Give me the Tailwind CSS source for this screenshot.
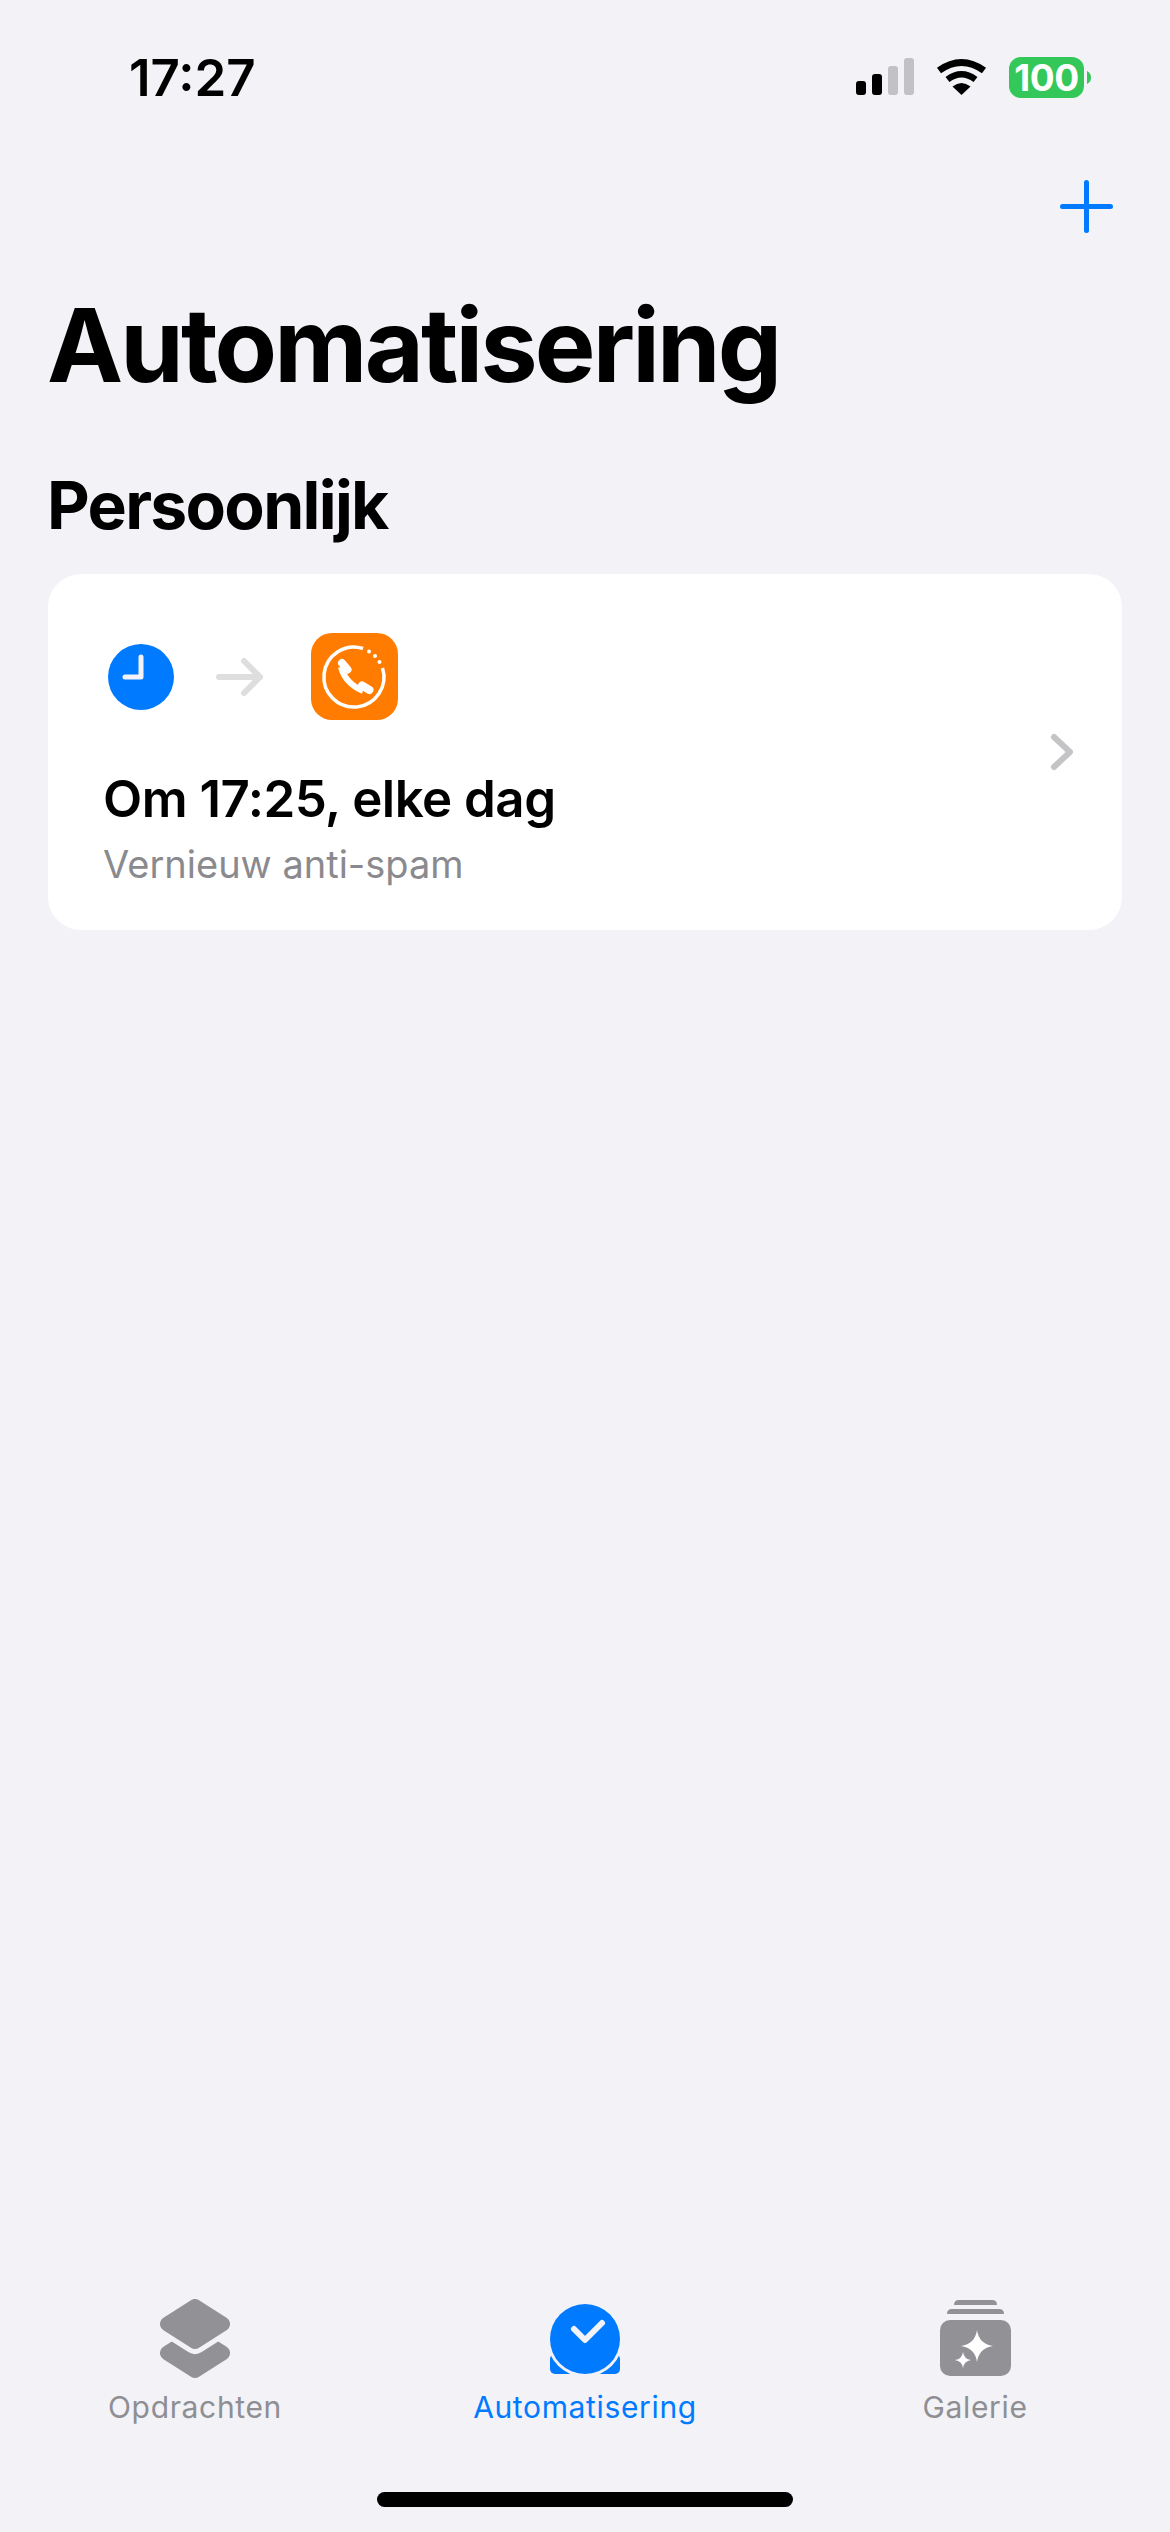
<!DOCTYPE html>
<html lang="nl">
<head>
    <meta charset="utf-8">
    <title>Automatisering</title>
    <script src="https://cdn.jsdelivr.net/npm/@tailwindcss/browser@4"></script>
</head>
<body class="bg-[#f2f2f7] font-['Inter',sans-serif] text-black">
    <div class="flex flex-col h-[2532px] w-[1170px] overflow-hidden">
        <!-- Status bar -->
        <div class="flex items-center justify-between pt-[57px] pl-[129px] pr-[79px]">
            <span class="text-[51px] leading-[41px] font-semibold">17:27</span>
            <div class="flex items-center">
                <div class="flex items-end gap-[6px] h-[37px] mt-[-2px]">
                    <div class="w-[10px] h-[14px] rounded-[3px] bg-black"></div>
                    <div class="w-[10px] h-[21px] rounded-[3px] bg-black"></div>
                    <div class="w-[10px] h-[29px] rounded-[3px] bg-[#c1c1c6]"></div>
                    <div class="w-[10px] h-[37px] rounded-[3px] bg-[#c1c1c6]"></div>
                </div>
                <svg class="ml-[22px] mt-[-2px]" width="51" height="37" viewBox="0 0 51 37" fill="none">
                    <path d="M3 12.5Q25.5 -3.5 48 12.5" stroke="#000" stroke-width="7"/>
                    <path d="M11.5 21.5Q25.5 11 39.5 21.5" stroke="#000" stroke-width="6.5"/>
                    <path d="M16.5 28.5Q25.5 21.5 34.5 28.5L25.5 37Z" fill="#000"/>
                </svg>
                <div class="ml-[22px] w-[75px] h-[41px] rounded-[12px] bg-[#34c759] text-white text-[37px] leading-[41px] font-bold text-center tracking-[-0.5px]">100</div>
                <svg class="ml-[3px]" width="4" height="13" viewBox="0 0 4 13"><path d="M0 0Q4 2 4 6.5Q4 11 0 13Z" fill="#34c759"/></svg>
            </div>
        </div>

        <!-- Add button -->
        <div class="flex justify-end pr-[57px] mt-[82px]">
            <svg width="53" height="53" viewBox="0 0 53 53" fill="none" stroke="#007aff" stroke-width="5" stroke-linecap="round">
                <path d="M26.5 2.5V50.5M2.5 26.5H50.5"/>
            </svg>
        </div>

        <h1 class="ml-[47px] mt-[52px] text-[102px] leading-[120px] font-bold tracking-[-2.8px]">Automatisering</h1>
        <h2 class="ml-[47px] mt-[60px] text-[66px] leading-[80px] font-bold tracking-[-1.7px]">Persoonlijk</h2>

        <!-- Automation card -->
        <div class="mx-[48px] mt-[29px] h-[356px] bg-white rounded-[33px] flex items-start justify-between pl-[55px] pr-[50px] pt-[59px]">
            <div>
                <div class="flex items-center pl-[5px]">
                    <svg width="66" height="66" viewBox="0 0 66 66">
                        <circle cx="33" cy="33" r="33" fill="#007aff"/>
                        <path d="M33 13V33H17" fill="none" stroke="#f2f2f7" stroke-width="5" stroke-linecap="round" stroke-linejoin="round"/>
                    </svg>
                    <svg class="ml-[42px]" width="48" height="38" viewBox="0 0 48 38" fill="none" stroke="#dedede" stroke-width="6" stroke-linecap="round" stroke-linejoin="round">
                        <path d="M3 19H44M28 3L44 19L28 35"/>
                    </svg>
                    <svg class="ml-[47px]" width="87" height="87" viewBox="0 0 87 87" fill="none">
                        <rect width="87" height="87" rx="21" fill="#ff7c00"/>
                        <path d="M52 15.5A30 30 0 1 0 71.5 35" stroke="#fff" stroke-width="3.5"/>
                        <circle cx="58" cy="18.5" r="2" fill="#fff"/>
                        <circle cx="64" cy="23" r="2" fill="#fff"/>
                        <circle cx="68.5" cy="29" r="2" fill="#fff"/>
                        <path d="M30 34Q34 50 52 58" stroke="#fff" stroke-width="6"/>
                        <path d="M31 30L36.5 36.5M51 52.5L58.5 57" stroke="#fff" stroke-width="8" stroke-linecap="round"/>
                    </svg>
                </div>
                <p class="mt-[47px] text-[51px] leading-[64px] font-semibold tracking-[-0.5px]">Om 17:25, elke dag</p>
                <p class="mt-[8px] text-[38px] leading-[50px] text-[#8a8a8e]">Vernieuw anti-spam</p>
            </div>
            <svg class="self-center mt-[-59px] mr-[-2px]" width="24" height="38" viewBox="0 0 24 38" fill="none" stroke="#c4c4c7" stroke-width="6" stroke-linecap="round" stroke-linejoin="round">
                <path d="M4 4L20 19L4 34"/>
            </svg>
        </div>

        <!-- Tab bar -->
        <div class="mt-auto grid grid-cols-3 text-[30px] leading-[40px] tracking-[0.65px] text-center">
            <div class="flex flex-col items-center text-[#8e8e93]">
                <div class="h-[80px] flex items-start">
                    <svg width="70" height="80" viewBox="0 0 70 80" stroke-linejoin="round">
                        <path d="M35 36.5L62.5 54L35 71.5L7.5 54Z" fill="#929296" stroke="#929296" stroke-width="15"/>
                        <path d="M35 7.5L62.5 25L35 42.5L7.5 25Z" fill="#f2f2f7" stroke="#f2f2f7" stroke-width="25"/>
                        <path d="M35 7.5L62.5 25L35 42.5L7.5 25Z" fill="#929296" stroke="#929296" stroke-width="15"/>
                    </svg>
                </div>
                <span class="mt-[8px]">Opdrachten</span>
            </div>
            <div class="flex flex-col items-center text-[#007aff]">
                <div class="h-[80px] flex items-start pt-[5px]">
                    <svg width="70" height="70" viewBox="0 0 70 70" fill="none">
                        <rect y="50" width="70" height="20" rx="5" fill="#007aff"/>
                        <circle cx="35" cy="35" r="38" fill="#f2f2f7"/>
                        <circle cx="35" cy="35" r="35" fill="#007aff"/>
                        <path d="M24 25L35 36L52 19" stroke="#f2f2f7" stroke-width="6" stroke-linecap="round" stroke-linejoin="round"/>
                    </svg>
                </div>
                <span class="mt-[8px]">Automatisering</span>
            </div>
            <div class="flex flex-col items-center text-[#8e8e93]">
                <div class="h-[80px] flex items-start pt-[1px]">
                    <svg width="71" height="76" viewBox="0 0 71 76">
                        <path d="M14 5Q14 0 19 0H52Q57 0 57 5Z" fill="#929296"/>
                        <path d="M7 14Q7 9 12 9H59Q64 9 64 14Z" fill="#929296"/>
                        <rect y="20" width="71" height="56" rx="10" fill="#929296"/>
                        <path d="M37 30Q39 44 53 46Q39 48 37 62Q35 48 21 46Q35 44 37 30Z" fill="#fff"/>
                        <path d="M23 52Q24 59 31 60Q24 61 23 68Q22 61 15 60Q22 59 23 52Z" fill="#fff"/>
                    </svg>
                </div>
                <span class="mt-[8px]">Galerie</span>
            </div>
        </div>

        <!-- Home indicator -->
        <div class="mx-auto mt-[65px] mb-[25px] w-[416px] h-[15px] rounded-full bg-black"></div>
    </div>
</body>
</html>
